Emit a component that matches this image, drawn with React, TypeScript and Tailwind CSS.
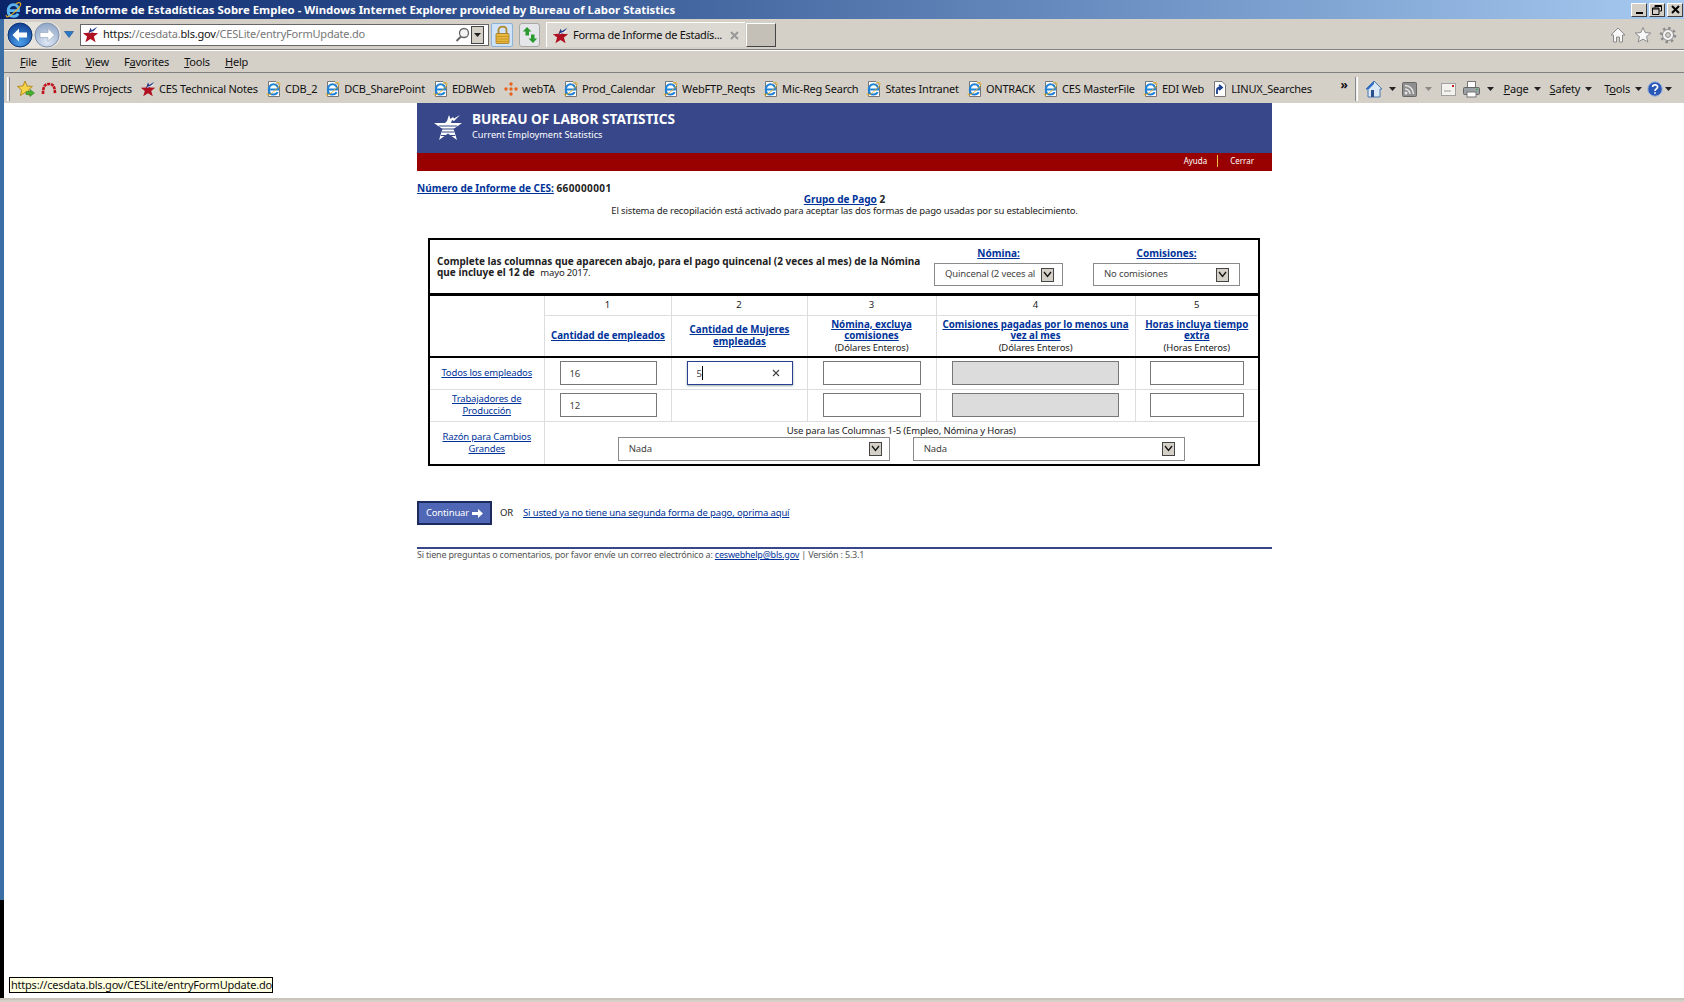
import { ReactNode } from "react";

const font = "font-['Noto_Sans',sans-serif]";
const headCell = "text-[9.75px] font-bold tracking-normal";
const strong = "text-[10px] font-bold tracking-normal";

const BlsStar = ({ size = 18 }: { size?: number }) => (
    <svg width={size} height={size} viewBox="0 0 20 20" className="shrink-0">
        <polygon points="10,3 12.4,8 19,8.4 14,12.4 16,19 10,15.2 4,19 6,12.4 1,8.4 7.6,8" fill="#b01020" />
        <path d="M8 9 L10 2 L11.5 5 L18 1 L13 7 Z" fill="#1f3a8a" />
        <path d="M9 8 L17 5" stroke="#fff" strokeWidth="1" />
    </svg>
);

const IeIcon = ({ size = 16, page: doc = true }: { size?: number; page?: boolean }) => (
    <svg width={size} height={size} viewBox="0 0 16 16" className="shrink-0">
        {doc && <path d="M2.5 .5 H10 L13.5 4 V15.5 H2.5 Z" fill="#fff" stroke="#777" strokeWidth="1" />}
        <path d="M3.5 8.6 H12 C12.4 5 10 3.2 7.6 3.2 C4.6 3.2 2.8 5.6 2.8 8.6 C2.8 12 4.8 13.6 7.4 13.6 C9.4 13.6 11 12.6 11.6 11.2" fill="none" stroke={doc ? "#1e82d8" : "#5ab4f0"} strokeWidth={doc ? 2 : 2.5} />
        <path d="M1 12.5 C1 15.5 4 14 9 9.5 C13 6 15.5 2.2 13 1.5 C12 1.2 10.5 2 9.5 2.8" fill="none" stroke="#e8b020" strokeWidth="1" />
    </svg>
);

const DropArrow = ({ className = "" }: { className?: string }) => (
    <svg width="7" height="4" viewBox="0 0 7 4" className={`shrink-0 ${className}`}>
        <path d="M0 0 H7 L3.5 4 Z" fill="#222" />
    </svg>
);

const NavButton = ({ back }: { back?: boolean }) => (
    <svg width="26" height="26" viewBox="0 0 26 26" className="shrink-0">
        <defs>
            <radialGradient id="navBlue" cx=".5" cy=".8" r=".8">
                <stop offset="0" stopColor="#4a9ee8" />
                <stop offset="1" stopColor="#0f3f92" />
            </radialGradient>
            <radialGradient id="navGray" cx=".5" cy=".8" r=".8">
                <stop offset="0" stopColor="#dfe8f4" />
                <stop offset="1" stopColor="#8ea6c8" />
            </radialGradient>
        </defs>
        <circle cx="13" cy="13" r="12" fill={back ? "url(#navBlue)" : "url(#navGray)"} stroke={back ? "#0b3274" : "#8394ad"} />
        {back ? (
            <path d="M5.5 13 L12 6.5 V10.5 H20 V15.5 H12 V19.5 Z" fill="#fff" />
        ) : (
            <path d="M20.5 13 L14 6.5 V10.5 H6 V15.5 H14 V19.5 Z" fill="#fff" stroke="#8ea0bb" strokeWidth=".6" />
        )}
    </svg>
);

const MenuItem = ({ k, rest, pre = "" }: { k: string; rest: string; pre?: string }) => (
    <span className="whitespace-nowrap">
        {pre}
        <span className="underline">{k}</span>
        {rest}
    </span>
);

const favorites = [
    { label: "DEWS Projects", icon: "dews" },
    { label: "CES Technical Notes", icon: "star" },
    { label: "CDB_2", icon: "ie" },
    { label: "DCB_SharePoint", icon: "ie" },
    { label: "EDBWeb", icon: "ie" },
    { label: "webTA", icon: "dots" },
    { label: "Prod_Calendar", icon: "ie" },
    { label: "WebFTP_Reqts", icon: "ie" },
    { label: "Mic-Reg Search", icon: "ie" },
    { label: "States Intranet", icon: "ie" },
    { label: "ONTRACK", icon: "ie" },
    { label: "CES MasterFile", icon: "ie" },
    { label: "EDI Web", icon: "ie" },
    { label: "LINUX_Searches", icon: "link" },
];

const FavIcon = ({ type }: { type: string }) => {
    if (type === "star") return <BlsStar size={16} />;
    if (type === "dews")
        return (
            <svg width="16" height="16" viewBox="0 0 16 16" className="shrink-0">
                <path d="M2 13 C2 4 5 3 8 3 C11 3 14 4 14 13" fill="none" stroke="#c01018" strokeWidth="2.6" strokeDasharray="3 .8" />
            </svg>
        );
    if (type === "dots")
        return (
            <svg width="16" height="16" viewBox="0 0 16 16" className="shrink-0" fill="#e8601c">
                <circle cx="8" cy="3" r="1.7" />
                <circle cx="3" cy="8" r="1.7" />
                <circle cx="8" cy="8" r="1.7" />
                <circle cx="13" cy="8" r="1.7" />
                <circle cx="8" cy="13" r="1.7" />
            </svg>
        );
    if (type === "link")
        return (
            <svg width="16" height="16" viewBox="0 0 16 16" className="shrink-0">
                <path d="M2.5 .5 H10 L13.5 4 V15.5 H2.5 Z" fill="#fff" stroke="#777" />
                <path d="M5 13 V9 C5 7 7 6.5 9 6.5 M7 4 L10 6.5 L7 9" fill="none" stroke="#1b3f8f" strokeWidth="1.8" />
            </svg>
        );
    return <IeIcon />;
};

const SelectBox = ({ value, className }: { value: string; className: string }) => (
    <div className={`flex items-center justify-between border border-[#8a8a8a] bg-white pl-[10px] ${className}`}>
        <span className="overflow-hidden whitespace-nowrap text-[#444]">{value}</span>
        <span className="flex h-[14px] w-[13px] shrink-0 items-center justify-center border border-[#444] bg-[#d4d0c8]">
            <svg width="9" height="7" viewBox="0 0 9 7">
                <path d="M1 1 L4.5 5.5 L8 1" fill="none" stroke="#111" strokeWidth="1.3" />
            </svg>
        </span>
    </div>
);

const CellInput = ({ value = "", className, disabled }: { value?: string; className: string; disabled?: boolean }) => (
    <input
        readOnly
        value={value}
        className={`mx-auto block h-[24px] border border-[#777] px-[9px] text-[9.5px] text-[#444] outline-none ${disabled ? "bg-[#dcdcdc]" : "bg-white"} ${className}`}
    />
);

const A = ({ children, className = "" }: { children: ReactNode; className?: string }) => (
    <a className={`text-[#00339a] underline ${className}`}>{children}</a>
);

export default function App() {
    return (
        <div className={`relative flex h-[1002px] w-[1684px] flex-col overflow-hidden bg-white ${font}`}>
            {/* title bar */}
            <div className="flex h-[19px] items-center bg-gradient-to-r from-[#0a246a] to-[#a6caf0]">
                <div className="ml-[5px] mr-[2px]">
                    <IeIcon size={18} page={false} />
                </div>
                <span className="whitespace-nowrap text-[11.4px] font-bold text-white">
                    Forma de Informe de Estadísticas Sobre Empleo - Windows Internet Explorer provided by Bureau of Labor Statistics
                </span>
                <div className="ml-auto mr-[1px] flex gap-[2px]">
                    {["min", "max", "close"].map((b) => (
                        <span key={b} className="flex h-[14px] w-[16px] items-center justify-center border border-b-[#404040] border-l-white border-r-[#404040] border-t-white bg-[#d4d0c8]">
                            {b === "min" && <span className="mt-[7px] h-[2px] w-[7px] bg-black" />}
                            {b === "max" && (
                                <svg width="10" height="10" viewBox="0 0 10 10">
                                    <path d="M3 2.5 V.5 H9.5 V6 H7.5 M.5 3 H7 V9.5 H.5 Z M.5 4 H7 M3 1.5 H9.5" fill="none" stroke="#000" />
                                </svg>
                            )}
                            {b === "close" && (
                                <svg width="9" height="9" viewBox="0 0 9 9">
                                    <path d="M1 1 L8 8 M8 1 L1 8" stroke="#000" strokeWidth="2" />
                                </svg>
                            )}
                        </span>
                    ))}
                </div>
            </div>

            <div className="flex flex-1">
                {/* window frame */}
                <div className="flex w-1 flex-col">
                    <div className="h-[881px] bg-[#3a6ea5]" />
                    <div className="h-[98px] bg-black" />
                </div>

                <div className="flex w-[1680px] flex-col">
                    {/* address row */}
                    <div className="flex h-[31px] items-center border-b border-[#808080] bg-[#d4d0c8] pt-px text-[11px] tracking-[-.2px]">
                        <div className="ml-[3px] flex items-center rounded-full bg-[#e6e3dc] pr-[1px]">
                            <NavButton back />
                            <div className="ml-[1px]">
                                <NavButton />
                            </div>
                        </div>
                        <svg width="10" height="7" viewBox="0 0 10 7" className="ml-[3px]">
                            <path d="M.5 .5 H9.5 L5 6.5 Z" fill="#2a78c8" stroke="#1b4f8f" strokeWidth=".6" />
                        </svg>
                        <div className="ml-[6px] flex h-[22px] w-[409px] items-center border border-[#666] bg-white pl-[1px] pr-[4px]">
                            <BlsStar size={17} />
                            <span className="ml-[4px] whitespace-nowrap text-[#777]">
                                <span className="text-[#111]">https:</span>//cesdata.<span className="text-[#111]">bls.gov</span>/CESLite/entryFormUpdate.do
                            </span>
                            <svg width="15" height="15" viewBox="0 0 15 15" className="ml-auto">
                                <circle cx="9" cy="6" r="4.5" fill="#f4f4f4" stroke="#666" strokeWidth="1.3" />
                                <path d="M6 9.5 L1.5 14" stroke="#666" strokeWidth="2" />
                            </svg>
                            <span className="ml-[1px] flex h-[18px] w-[13px] items-center justify-center border border-[#444] bg-[#d4d0c8]">
                                <DropArrow />
                            </span>
                        </div>
                        <div className="ml-[2px] flex h-[24px] w-[22px] items-center justify-center rounded-[2px] border border-[#8db2d8] bg-[#cfe2f8]">
                            <svg width="15" height="19" viewBox="0 0 15 19">
                                <path d="M3.5 9 V5 C3.5 .5 11.5 .5 11.5 5 V9" fill="none" stroke="#b08a2a" strokeWidth="1.8" />
                                <rect x="1" y="8.5" width="13" height="10" rx="1" fill="#e8b840" stroke="#9a7420" strokeWidth=".8" />
                                <path d="M1.5 11.5 H13.5 M1.5 14 H13.5 M1.5 16.5 H13.5" stroke="#c89820" />
                            </svg>
                        </div>
                        <div className="ml-[6px] flex h-[24px] w-[21px] items-center justify-center rounded-[3px] border border-[#a8a8a8] bg-[#e4e6ea]">
                            <svg width="16" height="18" viewBox="0 0 16 18">
                                <path d="M5 1 L9.5 5.5 H7 V9.5 H3.5 V5.5 H.8 Z" fill="#2a9a30" />
                                <path d="M11 17 L6.5 12.5 H9 V8.5 H12.5 V12.5 H15.2 Z" fill="#2a9a30" />
                            </svg>
                        </div>
                        <div className="ml-[6px] flex h-[25px] w-[199px] items-center border-l border-t border-white bg-[#dcd9d2] pl-[5px] pr-[6px]">
                            <BlsStar size={17} />
                            <span className="ml-[4px] whitespace-nowrap tracking-[-.3px] text-[#111]">Forma de Informe de Estadís...</span>
                            <svg width="9" height="9" viewBox="0 0 9 9" className="ml-auto">
                                <path d="M1 1 L8 8 M8 1 L1 8" stroke="#999" strokeWidth="2" />
                            </svg>
                        </div>
                        <div className="ml-px h-[24px] w-[30px] border border-b-[#444] border-l-white border-r-[#444] border-t-white bg-[#c4c0b8]" />
                        <div className="ml-auto mr-[7px] flex items-center gap-[7px]">
                            <svg width="18" height="18" viewBox="0 0 18 18">
                                <path d="M9 2 L16 9 H13.5 V16 H10.5 V11 H7.5 V16 H4.5 V9 H2 Z" fill="#f8f8f8" stroke="#8a8a8a" />
                            </svg>
                            <svg width="18" height="18" viewBox="0 0 18 18">
                                <path d="M9 1.5 L11.2 6.6 L16.8 7 L12.5 10.6 L13.9 16 L9 13.1 L4.1 16 L5.5 10.6 L1.2 7 L6.8 6.6 Z" fill="#f8f8f8" stroke="#8a8a8a" />
                            </svg>
                            <svg width="18" height="18" viewBox="0 0 18 18">
                                <circle cx="9" cy="9" r="5.5" fill="#f4f4f4" stroke="#8a8a8a" />
                                <circle cx="9" cy="9" r="7" fill="none" stroke="#8a8a8a" strokeWidth="2.4" strokeDasharray="2.4 3.1" />
                                <circle cx="9" cy="9" r="2.4" fill="#d4d0c8" stroke="#8a8a8a" />
                            </svg>
                        </div>
                    </div>

                    {/* menu row */}
                    <div className="flex h-[22px] items-center gap-[15px] border-t border-white bg-[#d4d0c8] pl-[16px] pt-px text-[11px] tracking-[-.2px] text-[#111]">
                        <MenuItem k="F" rest="ile" />
                        <MenuItem k="E" rest="dit" />
                        <MenuItem k="V" rest="iew" />
                        <MenuItem pre="F" k="a" rest="vorites" />
                        <MenuItem k="T" rest="ools" />
                        <MenuItem k="H" rest="elp" />
                    </div>

                    {/* favorites + command bar */}
                    <div className="flex h-[31px] items-center border-t border-[#808080] bg-[#d4d0c8] pt-[2px] text-[11px] tracking-[-.2px] text-[#111]">
                        <div className="ml-[3px] h-[24px] w-[3px] border-x border-l-white border-r-[#888] bg-[#eee]" />
                        <svg width="18" height="18" viewBox="0 0 18 18" className="ml-[7px] shrink-0">
                            <path d="M8 1 L10 6 L15.5 6.4 L11.4 10 L12.6 15.5 L8 12.5 L3.4 15.5 L4.6 10 L.5 6.4 L6 6 Z" fill="#f6d44a" stroke="#b88a20" />
                            <path d="M9 11.5 H13 V9.5 L17.5 13 L13 16.5 V14.5 H9 Z" fill="#44b030" stroke="#2a7a20" strokeWidth=".5" />
                        </svg>
                        <div className="ml-[6px] flex items-center gap-[8px]">
                            {favorites.map((f) => (
                                <span key={f.label} className="flex items-center gap-[3px] whitespace-nowrap">
                                    <FavIcon type={f.icon} />
                                    {f.label}
                                </span>
                            ))}
                        </div>
                        <div className="ml-auto mr-[12px] flex items-center">
                            <span className="-mt-[8px] text-[12px] font-bold">»</span>
                            <div className="ml-[7px] h-[24px] w-[3px] border-x border-l-[#888] border-r-white bg-[#eee]" />
                            <svg width="18" height="18" viewBox="0 0 18 18" className="ml-[7px] shrink-0">
                                <path d="M9 1 L17 9 H15 V17 H3 V9 H1 Z" fill="#dbe8f6" stroke="#4a78b0" />
                                <path d="M9 1 L1 9 H4 L9 4 Z" fill="#2f6fc8" />
                                <rect x="6" y="10" width="3" height="7" fill="#2a4f8a" />
                            </svg>
                            <DropArrow className="ml-[6px]" />
                            <svg width="15" height="15" viewBox="0 0 15 15" className="ml-[6px] shrink-0">
                                <rect x=".5" y=".5" width="14" height="14" rx="1" fill="#8f8f8f" stroke="#666" />
                                <circle cx="4" cy="11" r="1.5" fill="#e8e8e8" />
                                <path d="M3 7 A5 5 0 0 1 8 12 M3 3.5 A8.5 8.5 0 0 1 11.5 12" fill="none" stroke="#e8e8e8" strokeWidth="1.5" />
                            </svg>
                            <DropArrow className="ml-[8px] opacity-40" />
                            <svg width="15" height="13" viewBox="0 0 15 13" className="ml-[9px] shrink-0">
                                <rect x=".5" y=".5" width="14" height="12" fill="#f4f2ee" stroke="#a0a0a0" />
                                <path d="M3 8 H10" stroke="#999" />
                                <rect x="11" y="2" width="2" height="2" fill="#c02020" />
                            </svg>
                            <svg width="17" height="17" viewBox="0 0 17 17" className="ml-[7px] shrink-0">
                                <rect x="4.5" y=".5" width="8" height="6" fill="#fff" stroke="#777" />
                                <rect x=".5" y="6.5" width="16" height="7" rx="1" fill="#9aa0a6" stroke="#666" />
                                <rect x="4" y="11" width="9" height="5" fill="#fff" stroke="#777" />
                                <rect x="13" y="8" width="2" height="1" fill="#30b040" />
                            </svg>
                            <DropArrow className="ml-[7px]" />
                            <span className="ml-[10px] flex items-center gap-[5px]">
                                <MenuItem k="P" rest="age" />
                                <DropArrow />
                            </span>
                            <span className="ml-[9px] flex items-center gap-[5px]">
                                <MenuItem k="S" rest="afety" />
                                <DropArrow />
                            </span>
                            <span className="ml-[12px] flex items-center gap-[5px]">
                                <MenuItem pre="T" k="o" rest="ols" />
                                <DropArrow />
                            </span>
                            <svg width="16" height="16" viewBox="0 0 16 16" className="ml-[5px] shrink-0">
                                <circle cx="8" cy="8" r="7.2" fill="#2a58b8" stroke="#9ab0d8" />
                                <path d="M5.6 6 C5.6 3.2 10.6 3.2 10.6 6 C10.6 8 8 7.8 8 10 M8 11.2 V12.8" fill="none" stroke="#fff" strokeWidth="1.7" />
                            </svg>
                            <DropArrow className="ml-[2px]" />
                        </div>
                    </div>

                    {/* page */}
                    <div className="ml-[413px] w-[855px] text-[9.5px] tracking-[-.15px] text-[#222]">
                        <div className="flex h-[50px] items-start bg-[#37478a] pl-[16px] pt-[8px] tracking-normal">
                            <svg width="30" height="30" viewBox="0 0 30 30" className="mt-[1px] shrink-0">
                                <path d="M14 9 L16 3 L17.5 7 L20 5 L21 6.5 L27 3 L21 9 L19 8 L18 11 H29 L20.5 17 L24 28 L15 21.5 L6 28 L9.5 17 L1 11 H12 Z" fill="#fff" />
                                <path d="M6 14 H24 M8 17 H22 M9 20 H21 M8 23.5 H22" stroke="#37478a" strokeWidth="1" />
                            </svg>
                            <div className="ml-[9px] text-white">
                                <div className="text-[13.6px] font-bold leading-[15px]">BUREAU OF LABOR STATISTICS</div>
                                <div className="mt-[2px] text-[9.2px] leading-[13px]">Current Employment Statistics</div>
                            </div>
                        </div>
                        <div className="flex h-[18px] items-center justify-end bg-[#990000] pb-[2px] pr-[18px] text-[8px] tracking-normal text-white">
                            <span>Ayuda</span>
                            <span className="ml-[10px] mr-[12px] h-[12px] w-px bg-[#f0c040]" />
                            <span>Cerrar</span>
                        </div>

                        <div className={`mt-[10px] leading-[14px] ${strong}`}>
                            <A>Número de Informe de CES:</A> <span className="tracking-[.4px]">660000001</span>
                        </div>
                        <div className="mt-[-1px] text-center leading-[12px]">
                            <div className={`leading-[11px] ${strong}`}>
                                <A>Grupo de Pago</A> 2
                            </div>
                            <div>El sistema de recopilación está activado para aceptar las dos formas de pago usadas por su establecimiento.</div>
                        </div>

                        {/* form table */}
                        <div className="mt-[21px] ml-[11px] w-[832px] border-2 border-black">
                            <div className="flex h-[56px] items-center border-b-[3px] border-black">
                                <div className={`ml-[7px] w-[490px] leading-[11px] ${strong}`}>
                                    Complete las columnas que aparecen abajo, para el pago quincenal (2 veces al mes) de la Nómina que incluye el 12 de <span className="ml-[3px] text-[9.5px] font-normal tracking-[-.15px]">mayo 2017.</span>
                                </div>
                                <div className="ml-[7px] flex flex-col items-center">
                                    <A className={`leading-[12px] ${strong}`}>Nómina:</A>
                                    <SelectBox value="Quincenal (2 veces al" className="mt-[4px] h-[23px] w-[129px] pr-[8px]" />
                                </div>
                                <div className="ml-[30px] flex flex-col items-center">
                                    <A className={`leading-[12px] ${strong}`}>Comisiones:</A>
                                    <SelectBox value="No comisiones" className="mt-[4px] h-[23px] w-[147px] pr-[10px]" />
                                </div>
                            </div>
                            <table className="w-[828px] table-fixed border-collapse text-center">
                                <colgroup>
                                    <col className="w-[114px]" />
                                    <col className="w-[127px]" />
                                    <col className="w-[136px]" />
                                    <col className="w-[129px]" />
                                    <col className="w-[199px]" />
                                    <col className="w-[123px]" />
                                </colgroup>
                                <tbody>
                                    <tr className="h-[19px] border-b border-[#ddd]">
                                        <td rowSpan={2} className="border-r border-[#ddd]" />
                                        {["1", "2", "3", "4", "5"].map((n) => (
                                            <td key={n} className="border-r border-[#ddd] last:border-r-0">{n}</td>
                                        ))}
                                    </tr>
                                    <tr className="h-[42px] border-b-[2px] border-black leading-[11.5px]">
                                        <td className={`border-r border-[#ddd] pl-px ${headCell}`}><A>Cantidad de empleados</A></td>
                                        <td className={`border-r border-[#ddd] pl-px ${headCell}`}><A>Cantidad de Mujeres empleadas</A></td>
                                        <td className="border-r border-[#ddd]">
                                            <div className={headCell}><A>Nómina, excluya comisiones</A></div>
                                            <div>(Dólares Enteros)</div>
                                        </td>
                                        <td className="border-r border-[#ddd]">
                                            <div className={headCell}><A>Comisiones pagadas por lo menos una vez al mes</A></div>
                                            <div>(Dólares Enteros)</div>
                                        </td>
                                        <td>
                                            <div className={headCell}><A>Horas incluya tiempo extra</A></div>
                                            <div>(Horas Enteros)</div>
                                        </td>
                                    </tr>
                                    <tr className="h-[32px] border-b border-[#ddd]">
                                        <td className="border-r border-[#ddd]"><A>Todos los empleados</A></td>
                                        <td className="border-r border-[#ddd] pl-px"><CellInput value="16" className="w-[97px]" /></td>
                                        <td className="border-r border-[#ddd] pl-px">
                                            <div className="relative mx-auto w-[106px]">
                                                <CellInput value="5" className="w-[106px] !border-[#2a3f8f] shadow-[0_1px_2px_#9aa]" />
                                                <span className="absolute left-[15px] top-[5px] h-[14px] w-px bg-black" />
                                                <svg width="8" height="8" viewBox="0 0 8 8" className="absolute right-[13px] top-[8px]">
                                                    <path d="M1 1 L7 7 M7 1 L1 7" stroke="#444" strokeWidth="1.2" />
                                                </svg>
                                            </div>
                                        </td>
                                        <td className="border-r border-[#ddd]"><CellInput className="w-[98px]" /></td>
                                        <td className="border-r border-[#ddd]"><CellInput disabled className="w-[167px]" /></td>
                                        <td><CellInput className="w-[94px]" /></td>
                                    </tr>
                                    <tr className="h-[32px] border-b border-[#ddd]">
                                        <td className="border-r border-[#ddd] leading-[12px]"><A>Trabajadores de<br />Producción</A></td>
                                        <td className="border-r border-[#ddd] pl-px"><CellInput value="12" className="w-[97px]" /></td>
                                        <td className="border-r border-[#ddd]" />
                                        <td className="border-r border-[#ddd]"><CellInput className="w-[98px]" /></td>
                                        <td className="border-r border-[#ddd]"><CellInput disabled className="w-[167px]" /></td>
                                        <td><CellInput className="w-[94px]" /></td>
                                    </tr>
                                    <tr className="h-[43px]">
                                        <td className="border-r border-[#ddd] leading-[12px]"><A>Razón para Cambios<br />Grandes</A></td>
                                        <td colSpan={5}>
                                            <div className="leading-[12px]">Use para las Columnas 1-5 (Empleo, Nómina y Horas)</div>
                                            <div className="flex justify-center gap-[23px]">
                                                <SelectBox value="Nada" className="h-[24px] w-[272px] pr-[7px]" />
                                                <SelectBox value="Nada" className="h-[24px] w-[272px] pr-[9px]" />
                                            </div>
                                        </td>
                                    </tr>
                                </tbody>
                            </table>
                        </div>

                        {/* actions */}
                        <div className="mt-[35px] flex items-center">
                            <button className="flex h-[24px] w-[75px] items-center justify-center gap-[3px] border-2 border-[#1c2a5e] bg-[#4f67b5] text-[9.5px] text-white">
                                Continuar
                                <svg width="11" height="9" viewBox="0 0 11 9">
                                    <path d="M0 3 H6 V0 L11 4.5 L6 9 V6 H0 Z" fill="#fff" />
                                </svg>
                            </button>
                            <span className="ml-[8px]">OR</span>
                            <A className="ml-[10px]">Si usted ya no tiene una segunda forma de pago, oprima aquí</A>
                        </div>
                        <div className="mt-[22px] h-[2px] bg-[#37478a]" />
                        <div className="text-[9px] leading-[12px] tracking-[-.2px] text-[#555]">
                            Si tiene preguntas o comentarios, por favor envíe un correo electrónico a: <A>ceswebhelp@bls.gov</A> | Versión : 5.3.1
                        </div>
                    </div>
                </div>
            </div>

            {/* status bar */}
            <div className="h-[4px] border-t-2 border-[#c8c4bc] bg-[#d4d0c8]" />

            {/* link tooltip */}
            <div className="absolute left-[9px] top-[977px] flex h-[16px] w-[264px] items-center whitespace-nowrap border border-black bg-[#ffffe1] pl-[1px] text-[11px] tracking-[-.22px] text-[#111]">
                https://cesdata.bls.gov/CESLite/entryFormUpdate.do
            </div>
        </div>
    );
}
